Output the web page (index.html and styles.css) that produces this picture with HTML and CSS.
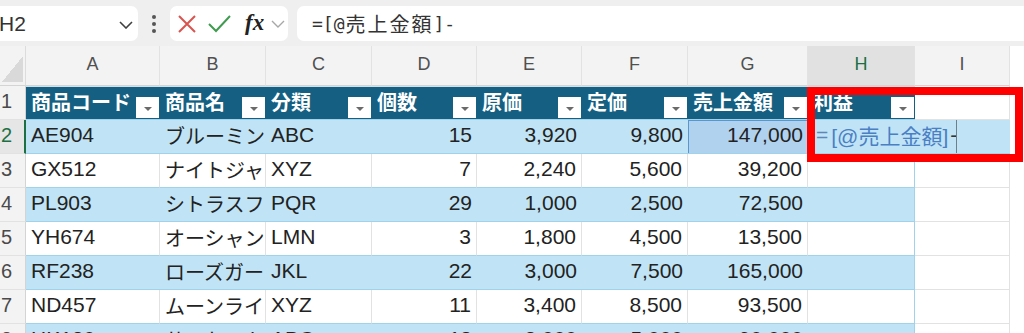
FILE: index.html
```html
<!DOCTYPE html>
<html lang="ja">
<head>
<meta charset="utf-8">
<title>Excel</title>
<link rel="stylesheet" href="styles.css">
</head>
<body>
<div class="app">
  <div class="toolbar">
    <div class="namebox">
      <span class="nb-text">H2</span>
      <svg class="chev" width="14" height="8" viewBox="0 0 14 8"><polyline points="1,1 7,7 13,1" fill="none" stroke="#404040" stroke-width="1.6"/></svg>
    </div>
    <div class="dots"><i></i><i></i><i></i></div>
    <div class="fbtns">
      <svg width="18" height="18" viewBox="0 0 18 18"><path d="M1 1 L17 17 M17 1 L1 17" stroke="#d9534f" stroke-width="2" fill="none"/></svg>
      <svg width="23" height="18" viewBox="0 0 23 18"><polyline points="1,9 8,16 22,1" fill="none" stroke="#3f9b4f" stroke-width="2"/></svg>
      <span class="fx">fx</span>
      <svg width="14" height="8" viewBox="0 0 14 8"><polyline points="1,1 7,7 13,1" fill="none" stroke="#a8a8a8" stroke-width="1.4"/></svg>
    </div>
    <div class="fbar"><span class="fa">=[@</span><span class="fj">売上金額</span><span class="fa">]-</span></div>
  </div>

  <div class="sheet">
    <!-- column header row -->
    <div class="corner"><span class="tri"></span></div>
    <div class="ch">A</div><div class="ch">B</div><div class="ch">C</div><div class="ch">D</div><div class="ch">E</div><div class="ch">F</div><div class="ch">G</div><div class="ch ch-sel">H</div><div class="ch">I</div><div class="ch-end"></div>

    <!-- row 1 -->
    <div class="rn">1</div>
    <div class="c th"><span>商品コード</span><span class="flt"><b></b></span></div>
    <div class="c th"><span>商品名</span><span class="flt"><b></b></span></div>
    <div class="c th"><span>分類</span><span class="flt"><b></b></span></div>
    <div class="c th"><span>個数</span><span class="flt"><b></b></span></div>
    <div class="c th"><span>原価</span><span class="flt"><b></b></span></div>
    <div class="c th"><span>定価</span><span class="flt"><b></b></span></div>
    <div class="c th"><span>売上金額</span><span class="flt"><b></b></span></div>
    <div class="c th"><span>利益</span><span class="flt"><b></b></span></div>
    <div class="c out"></div><div class="end"></div>

    <!-- row 2 -->
    <div class="rn rn-sel">2</div>
    <div class="c band">AE904</div>
    <div class="c band jp">ブルーミン</div>
    <div class="c band">ABC</div>
    <div class="c band num">15</div>
    <div class="c band num">3,920</div>
    <div class="c band num">9,800</div>
    <div class="c band num ref">147,000</div>
    <div class="c band edit"><span class="ed"><span class="eq">=</span><span class="rf">[@売上金額]</span><span class="mn">-</span></span></div>
    <div class="end"></div>

    <!-- row 3 -->
    <div class="rn">3</div>
    <div class="c plain">GX512</div>
    <div class="c plain jp">ナイトジャ</div>
    <div class="c plain">XYZ</div>
    <div class="c plain num">7</div>
    <div class="c plain num">2,240</div>
    <div class="c plain num">5,600</div>
    <div class="c plain num">39,200</div>
    <div class="c plain last"></div>
    <div class="c out"></div><div class="end"></div>

    <!-- row 4 -->
    <div class="rn">4</div>
    <div class="c band">PL903</div>
    <div class="c band jp">シトラスフ</div>
    <div class="c band">PQR</div>
    <div class="c band num">29</div>
    <div class="c band num">1,000</div>
    <div class="c band num">2,500</div>
    <div class="c band num">72,500</div>
    <div class="c band last"></div>
    <div class="c out"></div><div class="end"></div>

    <!-- row 5 -->
    <div class="rn">5</div>
    <div class="c plain">YH674</div>
    <div class="c plain jp">オーシャン</div>
    <div class="c plain">LMN</div>
    <div class="c plain num">3</div>
    <div class="c plain num">1,800</div>
    <div class="c plain num">4,500</div>
    <div class="c plain num">13,500</div>
    <div class="c plain last"></div>
    <div class="c out"></div><div class="end"></div>

    <!-- row 6 -->
    <div class="rn">6</div>
    <div class="c band">RF238</div>
    <div class="c band jp">ローズガー</div>
    <div class="c band">JKL</div>
    <div class="c band num">22</div>
    <div class="c band num">3,000</div>
    <div class="c band num">7,500</div>
    <div class="c band num">165,000</div>
    <div class="c band last"></div>
    <div class="c out"></div><div class="end"></div>

    <!-- row 7 -->
    <div class="rn">7</div>
    <div class="c plain">ND457</div>
    <div class="c plain jp">ムーンライ</div>
    <div class="c plain">XYZ</div>
    <div class="c plain num">11</div>
    <div class="c plain num">3,400</div>
    <div class="c plain num">8,500</div>
    <div class="c plain num">93,500</div>
    <div class="c plain last"></div>
    <div class="c out"></div><div class="end"></div>

    <!-- row 8 -->
    <div class="rn">8</div>
    <div class="c band">HK120</div>
    <div class="c band jp">サンセット</div>
    <div class="c band">ABC</div>
    <div class="c band num">18</div>
    <div class="c band num">3,000</div>
    <div class="c band num">5,000</div>
    <div class="c band num">90,000</div>
    <div class="c band last"></div>
    <div class="c out"></div><div class="end"></div>
  </div>

  <div class="redframe"></div>
</div>
</body>
</html>
```

FILE: styles.css
```css
* { box-sizing: border-box; }
html, body { margin: 0; padding: 0; }
body {
  width: 1024px;
  height: 333px;
  overflow: hidden;
  background: #ffffff;
  font-family: "Liberation Sans", "Noto Sans CJK JP", sans-serif;
  color: #222;
}
.app { position: relative; width: 1024px; height: 333px; overflow: hidden; }

/* ---------- toolbar ---------- */
.toolbar {
  height: 46px;
  background: #efefef;
  display: flex;
  align-items: flex-start;
  padding-top: 6px;
}
.namebox {
  width: 138px;
  height: 35px;
  background: #fff;
  border-radius: 0 7px 7px 0;
  display: flex;
  align-items: center;
  justify-content: space-between;
  padding-right: 5px;
}
.nb-text { font-size: 21px; color: #333; margin-left: -1px; }
.chev { margin-top: 2px; }
.dots {
  width: 32px;
  height: 35px;
  display: flex;
  flex-direction: column;
  align-items: center;
  justify-content: center;
  gap: 3px;
}
.dots i { display: block; width: 4px; height: 4px; border-radius: 2px; background: #555; }
.fbtns {
  width: 118px;
  height: 35px;
  background: #fff;
  border-radius: 7px;
  display: flex;
  align-items: center;
  padding-left: 8px;
  gap: 0;
}
.fbtns svg:nth-child(1) { margin-right: 12px; }
.fbtns svg:nth-child(2) { margin-right: 14px; }
.fx {
  font-family: "Liberation Serif", serif;
  font-style: italic;
  font-weight: bold;
  font-size: 23px;
  color: #222;
  margin-right: 7px;
  line-height: 1;
  margin-top: -3px;
}
.fbar {
  margin-left: 9px;
  flex: 1;
  height: 35px;
  background: #fff;
  border-radius: 7px 0 0 7px;
  display: flex;
  align-items: center;
  padding-left: 15px;
  color: #333;
  white-space: nowrap;
}
.fa { font-family: "DejaVu Sans Mono", "Liberation Mono", monospace; font-size: 18px; }
.fj { font-family: "Noto Sans CJK JP", sans-serif; font-size: 20px; letter-spacing: 2px; margin-left: 1px; }

/* ---------- sheet ---------- */
.sheet {
  display: grid;
  grid-template-columns: 26px 134px 106px 106px 105px 105px 106px 120px 107px 95px 1fr;
  grid-template-rows: 40px;
  grid-auto-rows: 34px;
}
.corner {
  background: #f3f3f3;
  border-right: 1px solid #dcdcdc;
  border-bottom: 1px solid #d4d4d4;
  display: flex;
  align-items: flex-end;
  justify-content: flex-end;
  padding: 0 2px 3px 0;
}
.tri {
  display: block;
  width: 21px;
  height: 26px;
  background: linear-gradient(to top left, #d9d9d9 50%, transparent 50%);
}
.ch {
  background: #f3f3f3;
  border-right: 1px solid #e2e2e2;
  border-bottom: 1px solid #d4d4d4;
  display: flex;
  align-items: center;
  justify-content: center;
  padding-bottom: 3px;
  font-size: 18px;
  color: #505050;
}
.ch-sel { background: #e1e1e1; color: #1d7044; }
.ch-end { background: #fff; }

.rn {
  background: #f3f3f3;
  border-right: 1px solid #d4d4d4;
  border-bottom: 1px solid #e2e2e2;
  display: flex;
  align-items: center;
  font-size: 20px;
  color: #4a4a4a;
  padding-left: 1px;
  padding-bottom: 2px;
}
.rn-sel { color: #1d7044; background: #e6e6e6; border-right: 2px solid #1d7044; }

.c {
  display: flex;
  align-items: center;
  padding: 0 5px 3px 5px;
  overflow: hidden;
  white-space: nowrap;
  font-size: 21px;
  color: #222;
  border-bottom: 1px solid #9fd3ec;
}
.jp { font-size: 20px; padding-left: 5px; padding-right: 0; }
.num { justify-content: flex-end; }
.band { background: #c0e4f5; }
.plain { background: #fff; border-right: 1px solid #e2e2e2; }
.last { border-right: 1px solid #9fd3ec; }
.out { background: #fff; border-right: 1px solid #e2e2e2; border-bottom: 1px solid #e2e2e2; }
.end { background: #fff; }

.th {
  background: #156082;
  color: #fff;
  font-family: "Noto Sans CJK JP", sans-serif;
  font-weight: bold;
  font-size: 20px;
  justify-content: space-between;
  padding: 0 1px 0 5px;
  border-top: 1px solid #cfe1ea;
  border-bottom: 1px solid #9fd3ec;
}
.th span:first-child { margin-top: -4px; }
.flt {
  align-self: flex-end;
  margin-bottom: 1px;
  width: 23px;
  height: 21px;
  background: #fff;
  display: flex;
  align-items: center;
  justify-content: center;
  flex: none;
}
.flt b {
  display: block;
  width: 0;
  height: 0;
  border-left: 4px solid transparent;
  border-right: 4px solid transparent;
  border-top: 4px solid #6a6a6a;
  margin-top: 2px;
}

.ref {
  background: #b1d2ee;
  box-shadow: inset 1px 0 0 #5b95d0, inset -1px 0 0 #5b95d0, inset 0 1px 0 #5b95d0;
}
.edit {
  grid-column: span 2;
  padding: 0;
  justify-content: flex-start;
}
.ed {
  width: 149px;
  height: 100%;
  display: flex;
  align-items: center;
  padding-left: 8px;
  padding-bottom: 3px;
  border-right: 1px solid #6b7f8c;
  overflow: hidden;
}
.eq { color: #5e87b8; }
.rf { color: #4a7fc5; margin-left: 3px; }
.mn { color: #333; margin-left: 2px; }

/* ---------- overlay annotation ---------- */
.redframe {
  position: absolute;
  left: 807px;
  top: 87px;
  width: 216px;
  height: 75px;
  border: 8px solid #ff0000;
}
```
